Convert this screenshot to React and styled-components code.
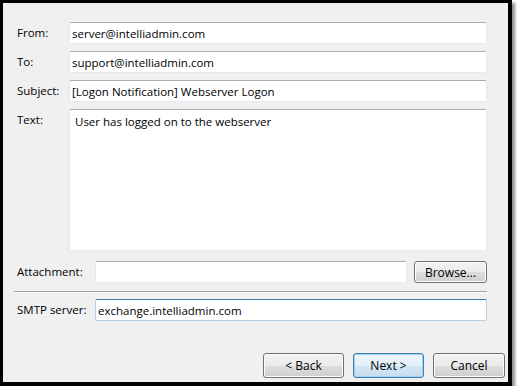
import styled, { createGlobalStyle, css } from 'styled-components';

const GlobalStyle = createGlobalStyle`
  html, body {
    margin: 0;
    padding: 0;
    background: #ffffff;
  }
  body {
    font-family: 'Open Sans', 'Noto Sans', sans-serif;
    font-size: 11.5px;
    color: #000000;
  }
`;

const fields = [
  { label: 'From:', value: 'server@intelliadmin.com' },
  { label: 'To:', value: 'support@intelliadmin.com' },
  { label: 'Subject:', value: '[Logon Notification] Webserver Logon' },
];

export default function App() {
  return (
    <>
      <GlobalStyle />
      <Frame>
        <Form>
          {fields.map((f) => (
            <Row key={f.label}>
              <Label width="52px">{f.label}</Label>
              <Input defaultValue={f.value} />
            </Row>
          ))}
          <TextRow>
            <Label width="52px">Text:</Label>
            <TextArea defaultValue="User has logged on to the webserver" />
          </TextRow>
          <Row $top="10px">
            <Label width="78px">Attachment:</Label>
            <Input defaultValue="" />
            <Button $w="73px" $h="22px" $left="7px">Browse...</Button>
          </Row>
          <Separator />
          <Row $top="6px">
            <Label width="78px">SMTP server:</Label>
            <Input $focused defaultValue="exchange.intelliadmin.com" />
          </Row>
        </Form>
        <Footer>
          <Button $w="81px">&lt; Back</Button>
          <Button $w="71px" $primary>Next &gt;</Button>
          <Button $w="72px">Cancel</Button>
        </Footer>
      </Frame>
    </>
  );
}

const Frame = styled.div`
  box-sizing: border-box;
  width: 512px;
  height: 386px;
  display: flex;
  flex-direction: column;
  background: #f0f0f0;
  border-style: solid;
  border-color: #000000;
  border-width: 3px 4px 4px 3px;
  box-shadow: 3px 3px 3px rgba(0, 0, 0, 0.45);
`;

const Form = styled.div`
  display: flex;
  flex-direction: column;
  padding: 19px 21px 0 11px;
`;

const Row = styled.div`
  display: flex;
  align-items: center;
  margin-top: ${(p) => p.$top || '7px'};
  padding-left: 3px;
  &:first-child {
    margin-top: 0;
  }
`;

const TextRow = styled.div`
  display: flex;
  align-items: flex-start;
  margin-top: 7px;
  padding-left: 3px;
`;

const Label = styled.span`
  flex: 0 0 ${(p) => p.width};
  line-height: 22px;
  white-space: nowrap;
  overflow: hidden;
`;

const fieldBase = css`
  box-sizing: border-box;
  font: inherit;
  color: #000000;
  background: #ffffff;
  border: 1px solid #e3e9ef;
  border-top-color: #abadb3;
  border-radius: 2px;
  outline: none;
  margin: 0;
`;

const Input = styled.input`
  ${fieldBase}
  flex: 1;
  min-width: 0;
  height: 22px;
  padding: 0 2px;
  ${(p) =>
    p.$focused &&
    css`
      border-color: #b5cfe7;
      border-top-color: #3d7bad;
    `}
`;

const TextArea = styled.textarea`
  ${fieldBase}
  flex: 1;
  height: 142px;
  padding: 4px 5px;
  resize: none;
  overflow: hidden;
`;

const Separator = styled.div`
  margin-top: 8px;
  height: 0;
  border-top: 1px solid #a0a0a0;
  border-bottom: 1px solid #ffffff;
`;

const Footer = styled.div`
  margin-top: auto;
  display: flex;
  justify-content: flex-end;
  gap: 9px;
  padding: 0 3px 4px 0;
`;

const Button = styled.button`
  box-sizing: border-box;
  flex: 0 0 auto;
  width: ${(p) => p.$w};
  height: ${(p) => p.$h || '25px'};
  margin-left: ${(p) => p.$left || '0'};
  font: inherit;
  font-size: 12px;
  color: #000000;
  padding: 0;
  border: 1px solid ${(p) => (p.$primary ? '#3c7fb1' : '#707070')};
  border-radius: 3px;
  background: ${(p) =>
    p.$primary
      ? 'linear-gradient(#f0f6fb 0%, #e4eff8 50%, #d3e6f4 51%, #c6ddef 100%)'
      : 'linear-gradient(#f2f2f2 0%, #ebebeb 50%, #dddddd 51%, #cfcfcf 100%)'};
  box-shadow: inset 0 0 0 1px ${(p) => (p.$primary ? '#9fd2f0' : '#fcfcfc')};
`;
